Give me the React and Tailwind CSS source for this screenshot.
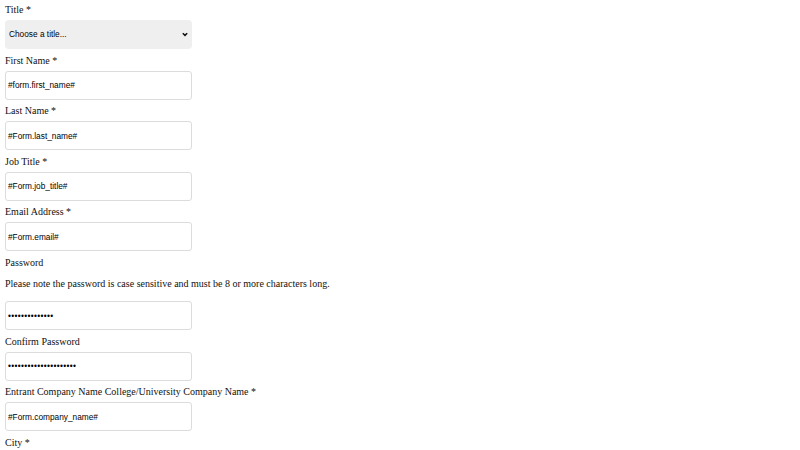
const labelCls =
  "block text-[10px] leading-[12px] text-[#111] font-['Liberation_Serif',serif]";
const inputCls =
  "block w-[187px] h-[29px] border border-[#dcdcdc] rounded-[3px] bg-white px-[2px] text-[8.3px] text-black font-['Liberation_Sans',Arial,sans-serif] outline-none";

const Field = ({ label, value, type = "text" }) => (
  <div className="mb-[5.5px]">
    <label className={labelCls}>{label}</label>
    {value !== undefined && (
      <input
        type={type}
        defaultValue={value}
        className={inputCls + " mt-[4px]" + (type === "password" ? " tracking-[0.35px]" : "")}
      />
    )}
  </div>
);

export default function App() {
  return (
    <div className="w-[800px] h-[450px] overflow-hidden bg-white px-[5px] pt-[4px]">
      <div className="mb-[5.5px]">
        <label className={labelCls}>Title *</label>
        <div className="relative mt-[4px] w-[187px]">
          <select
            defaultValue=""
            className="block w-[187px] h-[29px] appearance-none rounded-[4px] bg-[#efefef] border-0 pl-[4px] pr-[14px] text-[8.3px] text-black font-['Liberation_Sans',Arial,sans-serif] outline-none"
          >
            <option value="">Choose a title...</option>
            <option>Mr</option>
            <option>Mrs</option>
            <option>Ms</option>
            <option>Dr</option>
          </select>
          <svg
            className="pointer-events-none absolute right-[4px] top-[12px] w-[6px] h-[5px]"
            viewBox="0 0 6 5"
            fill="none"
          >
            <path d="M0.8 1.2 L3 3.4 L5.2 1.2" stroke="#111" strokeWidth="1.5" />
          </svg>
        </div>
      </div>
      <Field label="First Name *" value="#form.first_name#" />
      <Field label="Last Name *" value="#Form.last_name#" />
      <Field label="Job Title *" value="#Form.job_title#" />
      <Field label="Email Address *" value="#Form.email#" />

      <label className={labelCls}>Password</label>
      <p className="mt-[9.5px] text-[10px] leading-[12px] text-[#111] font-['Liberation_Serif',serif]">
        Please note the password is case sensitive and must be 8 or more characters long.
      </p>
      <input
        type="password"
        defaultValue="aaaaaaaaaaaaaa"
        className={inputCls + " mt-[11px] mb-[5.5px] tracking-[0.35px]"}
      />
      <Field label="Confirm Password" value="aaaaaaaaaaaaaaaaaaaaa" type="password" />
      <Field
        label="Entrant Company Name College/University Company Name *"
        value="#Form.company_name#"
      />
      <Field label="City *" />
    </div>
  );
}
